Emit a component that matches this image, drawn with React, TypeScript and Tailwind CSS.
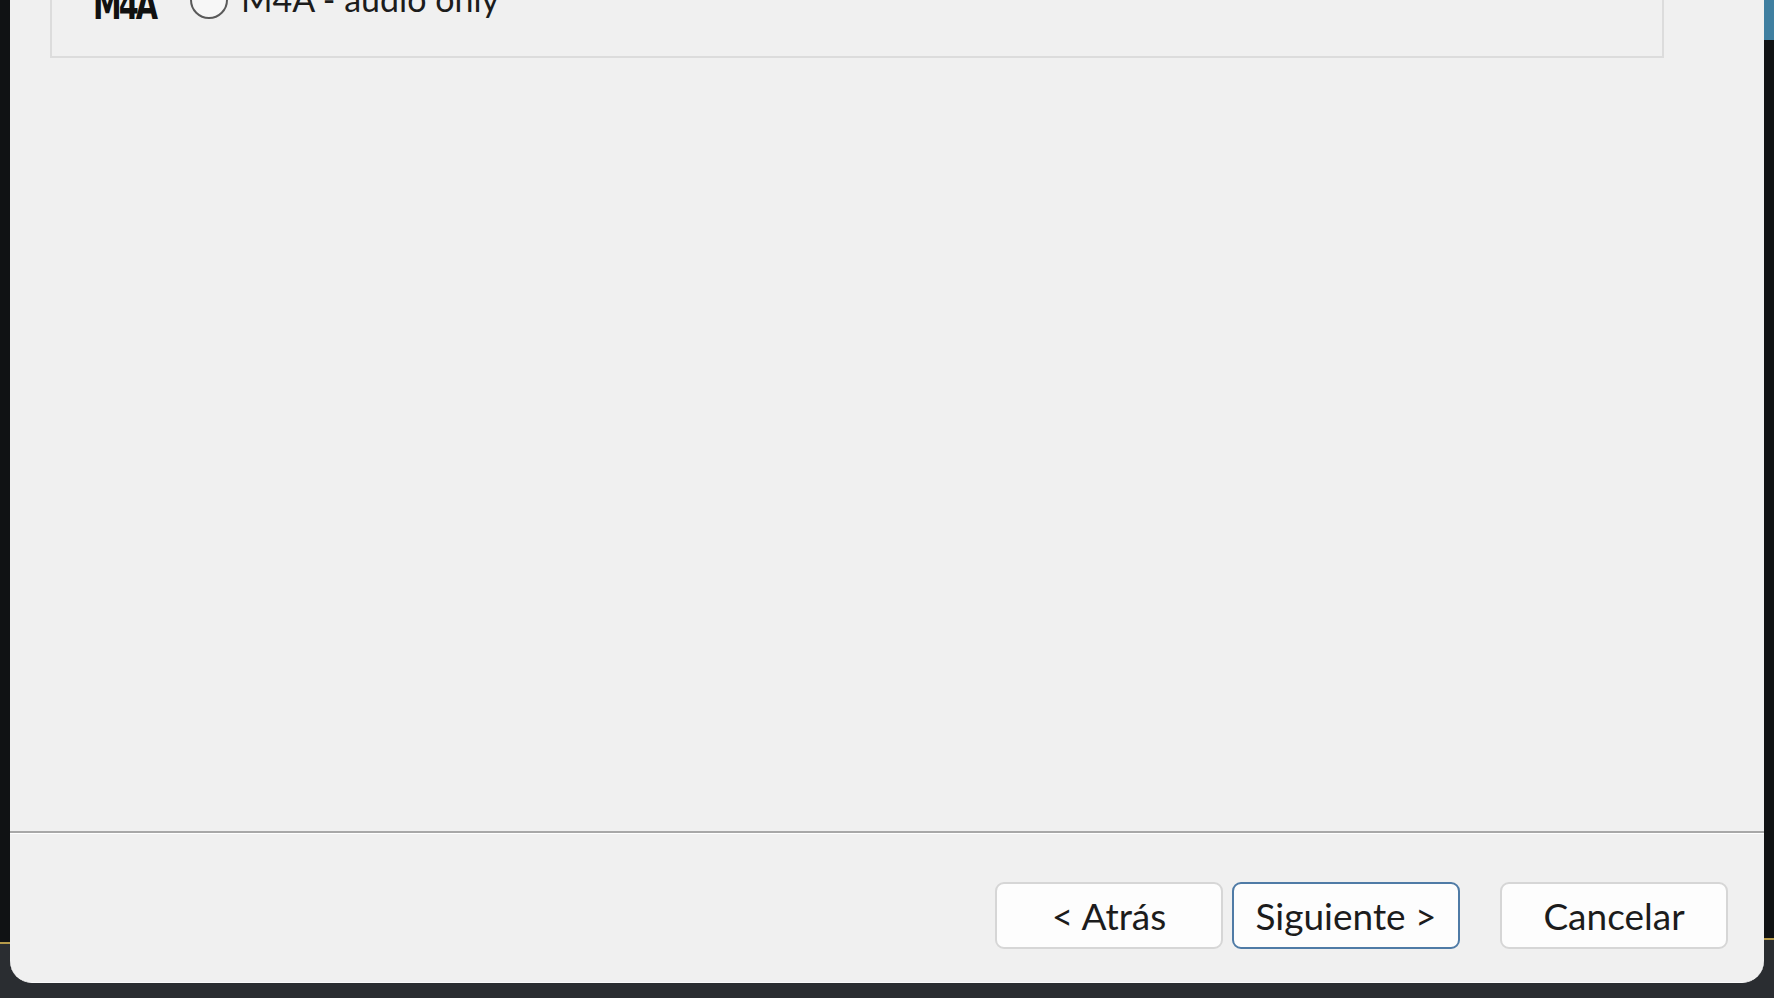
import React from "react";

const font = { fontFamily: "Lato, 'Liberation Sans', sans-serif" };

function Btn({ label, primary }: { label: string; primary?: boolean }) {
  return (
    <button
      className={
        "w-[228px] h-[67px] rounded-[9px] bg-[#fdfdfd] text-[37px] text-[#1c1c1c] flex items-center justify-center " +
        (primary ? "border-2 border-[#4f7ba6]" : "border-2 border-[#d6d6d6]")
      }
      style={font}
    >
      {label}
    </button>
  );
}

export default function App() {
  return (
    <div className="w-[1774px] h-[998px] bg-[#2a2d31] flex overflow-hidden">
      <div className="w-[10px] flex flex-col">
        <div className="h-[942px] bg-[#101214]" />
        <div className="h-[2px] bg-[#b59a4a]" />
        <div className="flex-1 bg-[#2a2d31]" />
      </div>
      <div className="w-[1754px] h-[983px] bg-[#f0f0f0] rounded-b-[22px] flex flex-col border-b border-[#fafafa]">
        <div className="h-[831px] px-[40px] overflow-hidden">
          <div className="-mt-[42px] h-[100px] w-[1614px] border-2 border-[#dcdcdc] flex items-end pb-[32px]">
            <div
              className="ml-[41px] mb-[-4px] w-[62px] text-[32px] font-bold leading-[36px] tracking-[-3px] text-[#111] scale-y-125 origin-bottom"
              style={{ fontFamily: "'DejaVu Sans Condensed', 'Liberation Sans Narrow', 'Liberation Sans', sans-serif" }}
            >
              M4A
            </div>
            <div className="ml-[35px] mb-[5px] w-[38px] h-[38px] rounded-full border-2 border-[#5a5a5a] bg-[#f7f7f7] shrink-0" />
            <div className="ml-[13px] mb-[8px] text-[34px] leading-[34px] text-[#1c1c1c]" style={font}>
              M4A - audio only
            </div>
          </div>
        </div>
        <div className="h-[2px] bg-[#a8a8a8]" />
        <div className="h-[1px] bg-[#ffffff]" />
        <div className="flex-1 flex items-start justify-end pt-[48px] pr-[36px]">
          <div className="flex gap-[9px]">
            <Btn label="< Atrás" />
            <Btn label="Siguiente >" primary />
          </div>
          <div className="ml-[40px]">
            <Btn label="Cancelar" />
          </div>
        </div>
      </div>
      <div className="w-[10px] flex flex-col">
        <div className="h-[40px] bg-[#3f7fa0]" />
        <div className="h-[898px] bg-[#101214]" />
        <div className="h-[2px] bg-[#b59a4a]" />
        <div className="flex-1 bg-[#2a2d31]" />
      </div>
    </div>
  );
}
